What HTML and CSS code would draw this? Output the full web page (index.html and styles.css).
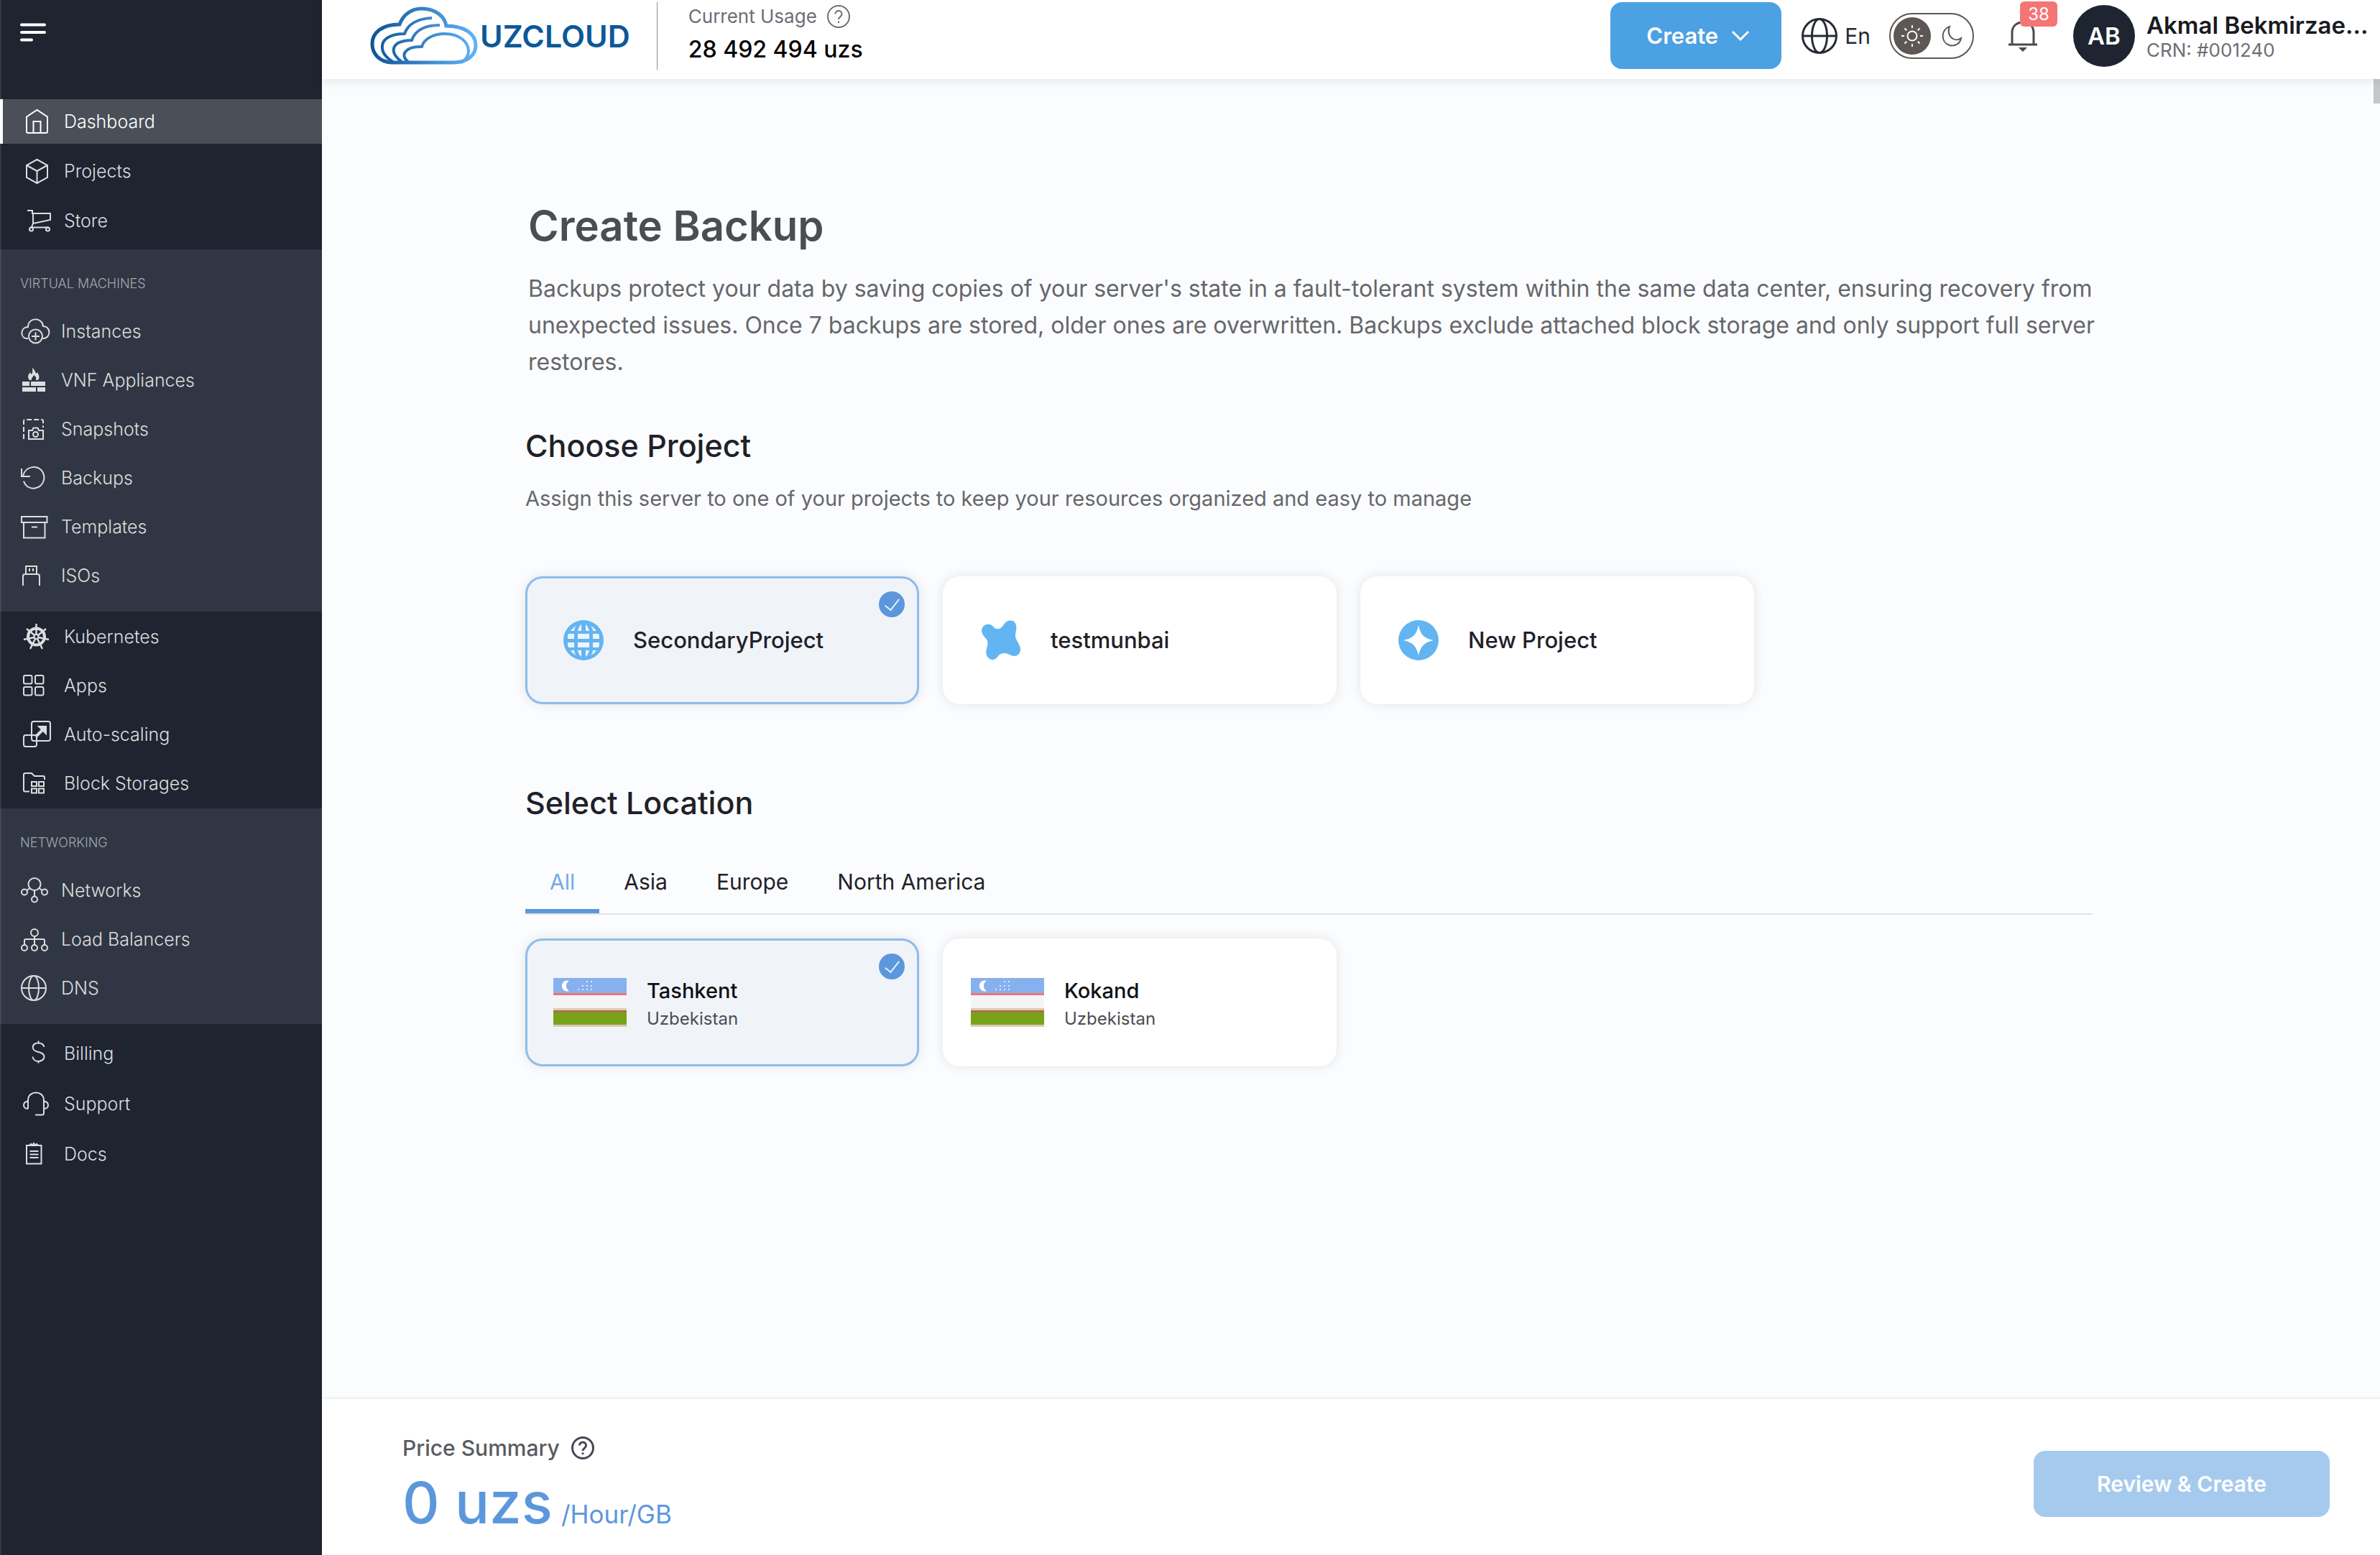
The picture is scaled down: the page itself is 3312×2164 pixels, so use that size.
FILE: index.html
```html
<!DOCTYPE html>
<html lang="en">
<head>
<meta charset="utf-8">
<title>Create Backup - UzCloud</title>
<meta name="viewport" content="width=device-width, initial-scale=1">
<link rel="stylesheet" href="styles.css">
</head>
<body>
<div class="app">
  <aside class="sidebar">
    <button class="menu-button" type="button" aria-label="Toggle menu">
      <svg class="menu-icon" viewBox="0 0 36 26"><path d="M2 2.500h32M2 13h32M2 23.500h14"/></svg>
    </button>
    <nav class="nav" aria-label="Main">
      <div class="nav-group nav-group-first">
        <a class="nav-item is-active" href="#dashboard">
          <svg class="icon" viewBox="0 0 40 40"><path d="M6 13.500 20.500 4 35 13.500V34a2 2 0 0 1-2 2H8a2 2 0 0 1-2-2zM15.500 36V20h10v16"/></svg>
          <span>Dashboard</span></a>
        <a class="nav-item" href="#projects">
          <svg class="icon" viewBox="0 0 40 40"><path d="M20.500 4 35 12v17l-14.500 8L6 29V12zM6 12l14.500 8L35 12M20.500 20v17"/></svg>
          <span>Projects</span></a>
        <a class="nav-item" href="#store">
          <svg class="icon" viewBox="0 0 40 40"><path d="M7 6h7v4h25v9l-24 5V10M15 24l-2 5M12 29.500h25"/><circle cx="12.500" cy="32" r="2.500"/><circle cx="35.500" cy="32" r="2.500"/></svg>
          <span>Store</span></a>
      </div>
      <div class="nav-group nav-group-shaded">
        <h2 class="nav-title">VIRTUAL MACHINES</h2>
        <a class="nav-item" href="#instances">
          <svg class="icon" viewBox="0 0 40 40"><path d="M12 30H9.500C0 28 2 14 12 14 12 0 32 0 33 13c11 0 11 16 1 17h-2"/><circle cx="22.500" cy="27" r="9.500"/><path d="M22.500 21.500v11M17 27h11"/></svg>
          <span>Instances</span></a>
        <a class="nav-item" href="#vnf">
          <svg class="icon icon-solid" viewBox="0 0 40 40"><path d="M4 22h10v6H4zM16 22h20v6H16zM4 30h19v6H4zM25 30h11v6H25zM14 20c-4-5-1-8 1-11 1 2 1 2 2 3 2-3 1-6 1-9 3 2 4 5 5 8l2-2c2 4 4 7 1 11h-3c1-3 0-5-3-7-1 3-4 4-3 7z"/></svg>
          <span>VNF Appliances</span></a>
        <a class="nav-item" href="#snapshots">
          <svg class="icon" viewBox="0 0 40 40"><path stroke-dasharray="7 3" d="M6 34V9a2 2 0 0 1 2-2h23a2 2 0 0 1 2 2v9"/><path d="M13 22h5l1.500-3.500h6L27 22h6v12H13z"/><circle cx="22.500" cy="27.500" r="3.500"/></svg>
          <span>Snapshots</span></a>
        <a class="nav-item" href="#backups">
          <svg class="icon" viewBox="0 0 40 40"><path d="M3 7v11h12M5 17C9 3 26 1 32.500 12 40 27 24 40 12 32.500c-3-2-5-4.500-6-8"/></svg>
          <span>Backups</span></a>
        <a class="nav-item" href="#templates">
          <svg class="icon" viewBox="0 0 40 40"><path d="M3 6h35.500v8H3zM6 14v21.500h29.500V14M17 20.500h8"/></svg>
          <span>Templates</span></a>
        <a class="nav-item" href="#isos">
          <svg class="icon" viewBox="0 0 40 40"><path d="M5 34V21a3 3 0 0 1 3-3h17a3 3 0 0 1 3 3v13M9 18V7h15v11M14 10v4M19 10v4"/></svg>
          <span>ISOs</span></a>
      </div>
      <div class="nav-group">
        <a class="nav-item" href="#kubernetes">
          <svg class="icon" viewBox="0 0 40 40"><circle cx="19.500" cy="20" r="11.500" stroke-width="4"/><circle cx="19.500" cy="20" r="3"/><path stroke-width="2.500" d="M19.500 17V2M22 18l11-9M22.500 21 37 24M21 23l7 14M18 23l-7 14M16.500 21 2 24M17 18 6 9"/></svg>
          <span>Kubernetes</span></a>
        <a class="nav-item" href="#apps">
          <svg class="icon" viewBox="0 0 40 40"><rect x="2" y="6" width="11.500" height="11.500" rx="2"/><rect x="18" y="6" width="11.500" height="11.500" rx="2"/><rect x="2" y="22" width="11.500" height="11.500" rx="2"/><rect x="18" y="22" width="11.500" height="11.500" rx="2"/></svg>
          <span>Apps</span></a>
        <a class="nav-item" href="#auto-scaling">
          <svg class="icon" viewBox="0 0 40 40"><rect x="13" y="2" width="26" height="27" rx="3"/><rect x="2" y="21" width="18" height="16" rx="3"/><path stroke-width="4" d="M19 23 31 11"/><path fill="currentColor" d="M23 9h10v10z"/></svg>
          <span>Auto-scaling</span></a>
        <a class="nav-item" href="#block-storages">
          <svg class="icon" viewBox="0 0 40 40"><path d="M10 31.500H4a2 2 0 0 1-2-2V8a2 2 0 0 1 2-2h9l4 4h12a2 2 0 0 1 2 2v3"/><rect x="13" y="18" width="7" height="6"/><rect x="23" y="18" width="7" height="6"/><rect x="13" y="27.500" width="7" height="6"/><rect x="23" y="27.500" width="7" height="6"/></svg>
          <span>Block Storages</span></a>
      </div>
      <div class="nav-group nav-group-shaded">
        <h2 class="nav-title">NETWORKING</h2>
        <a class="nav-item" href="#networks">
          <svg class="icon" viewBox="0 0 40 40"><circle cx="21" cy="11.500" r="8.500"/><circle cx="7" cy="22.500" r="4"/><circle cx="35" cy="22.500" r="4"/><circle cx="21" cy="32.500" r="4"/><path d="m14.500 17-4 3M27.500 17l4 3M21 20v8.500"/></svg>
          <span>Networks</span></a>
        <a class="nav-item" href="#load-balancers">
          <svg class="icon" viewBox="0 0 40 40"><circle cx="21" cy="11" r="5"/><circle cx="7" cy="32" r="4"/><circle cx="21" cy="32" r="4"/><circle cx="35" cy="32" r="4"/><path d="M21 16v12M7 28v-6a2 2 0 0 1 2-2h24a2 2 0 0 1 2 2v6"/></svg>
          <span>Load Balancers</span></a>
        <a class="nav-item" href="#dns">
          <svg class="icon" viewBox="0 0 40 40"><circle cx="20" cy="20" r="17"/><ellipse cx="20" cy="20" rx="7" ry="17"/><path d="M3 20h34"/></svg>
          <span>DNS</span></a>
      </div>
      <div class="nav-group nav-group-last">
        <a class="nav-item" href="#billing">
          <svg class="icon" viewBox="0 0 40 40"><path d="M30.500 11c-1-4-4-5.500-8-5.500-10 0-10 10.500-2 12 4 1 10 2 10 7 0 8-15 9-16 0M22.500 2.500v3.500M22.500 30v3.500"/></svg>
          <span>Billing</span></a>
        <a class="nav-item" href="#support">
          <svg class="icon" viewBox="0 0 40 40"><path d="M8 27V15C8 1 30 1 30 15v18a2.500 2.500 0 0 1-2.500 2.500H18M8 16.500c-8 1-8 10 0 10.500M30 16.500c8 1 8 10 0 10.500"/></svg>
          <span>Support</span></a>
        <a class="nav-item" href="#docs">
          <svg class="icon" viewBox="0 0 40 40"><path d="M6 8h20.500v25.500H6zM10 8l2-2 2 2 2-3 2 3 2-2 2 2M10.500 16h12M10.500 20.500h12M10.500 25h12"/></svg>
          <span>Docs</span></a>
      </div>
    </nav>
  </aside>

  <div class="page">
    <header class="topbar">
      <a class="logo" href="#home">
        <svg class="logo-mark" viewBox="0 0 150 81">
          <defs><linearGradient id="cloud" x1="0" y1="0" x2="150" y2="0" gradientUnits="userSpaceOnUse"><stop offset="0" stop-color="#0b5394"/><stop offset=".5" stop-color="#3a83c6"/><stop offset="1" stop-color="#62b5f8"/></linearGradient></defs>
          <g fill="none" stroke="url(#cloud)" stroke-width="5">
            <path d="M30 78C12 77 3 65 3 52c0-16 14-27 38-27C46 11 58 3 72 3c19 0 32 11 34 24 24 0 41 10 41 27 0 14-12 24-31 24z"/>
            <path stroke-width="4" d="M32 77C20 70 16 62 17 54c1-10 14-16 31-16 4-12 16-21 38-22"/>
            <path stroke-width="4" d="M44 77C28 66 26 48 58 47c4-12 16-21 39-21"/>
            <path stroke-width="4" d="M53 77c-12-9-4-22 19-21 3-11 16-18 32-18 21 0 33 12 33 24 0 7-4 12-10 16"/>
          </g>
        </svg>
        <span class="logo-text">UZCLOUD</span>
      </a>
      <div class="usage">
        <div class="usage-label">Current Usage
          <button class="help" type="button" aria-label="About current usage"><svg viewBox="0 0 32 32"><circle cx="16" cy="16" r="15"/><path d="M11.500 12.500c0-6 9-6 9 0 0 4-4.500 4-4.500 7.500M16 22.500V25"/></svg></button>
        </div>
        <div class="usage-value">28 492 494 uzs</div>
      </div>
      <div class="actions">
        <button class="create-button" type="button">Create
          <svg class="chevron" viewBox="0 0 26 16"><path d="m2 2 11 11L24 2"/></svg></button>
        <button class="language" type="button">
          <svg class="globe" viewBox="0 0 50 50"><circle cx="25" cy="25" r="23.500"/><ellipse cx="25" cy="25" rx="10.500" ry="23.500"/><path d="M2 25h46"/></svg>En</button>
        <button class="theme" type="button" aria-label="Switch theme">
          <span class="theme-knob"><svg class="sun" viewBox="0 0 34 34"><circle cx="17" cy="17" r="6.500"/><path d="M17 2v4M17 28v4M2 17h4M28 17h4M6.500 6.500l2.800 2.800M24.700 24.700l2.800 2.800M27.500 6.500l-2.800 2.800M9.300 24.700l-2.800 2.800"/></svg></span>
          <svg class="moon" viewBox="0 0 30 30"><path d="M12 2C0 6-1 24 12 28c8 2 15-3 16-10-9 7-21-3-16-16z"/></svg>
        </button>
        <button class="bell" type="button" aria-label="Notifications">
          <svg class="bell-icon" viewBox="0 0 44 44"><path d="M7 33V17C7 9 13 3 22 3s15 6 15 14v16M2 34h40M19.500 39.500h5L22 42z"/></svg>
          <span class="badge">38</span></button>
        <a class="profile" href="#profile">
          <span class="avatar">AB</span>
          <span class="profile-text"><span class="profile-name">Akmal Bekmirzae...</span><span class="profile-crn">CRN: #001240</span></span>
        </a>
      </div>
    </header>

    <main class="content">
      <div class="intro">
        <h1>Create Backup</h1>
        <p>Backups protect your data by saving copies of your server's state in a fault-tolerant system within the same data center, ensuring recovery from unexpected issues. Once 7 backups are stored, older ones are overwritten. Backups exclude attached block storage and only support full server restores.</p>
      </div>

      <section class="projects" aria-labelledby="projects-title">
        <h2 id="projects-title">Choose Project</h2>
        <p>Assign this server to one of your projects to keep your resources organized and easy to manage</p>
        <div class="cards">
          <label class="card">
            <input type="radio" name="project" checked>
            <svg class="project-icon" viewBox="0 0 56 56"><circle cx="28" cy="28" r="28" fill="#62b5f2"/><path fill="#f0f4f9" d="M25 6v9h-5c1-4 3-8 5-9zM31 6v9h5c-1-4-3-8-5-9zM18 8c-4 2-6 4-8 7h5c0-2 1-5 3-7zM38 8c4 2 6 4 8 7h-5c0-2-1-5-3-7zM7 19h8v7H6c0-3 0-5 1-7zM20 19h16v7H20zM41 19h8c1 2 1 4 1 7h-9zM6 31h9v7H7c-1-2-1-4-1-7zM20 31h16v7H20zM41 31h9c0 3 0 5-1 7h-8zM10 42h5c0 2 1 5 3 7-4-2-6-4-8-7zM20 42h5v9c-2-1-4-5-5-9zM31 42h5c-1 4-3 8-5 9zM41 42h5c-2 3-4 5-8 7 2-2 3-5 3-7z"/></svg>
            <span class="card-name">SecondaryProject</span>
          </label>
          <label class="card">
            <input type="radio" name="project">
            <svg class="project-icon" viewBox="0 0 56 56"><path fill="#62b5f2" d="M3 9c4-5 12-4 15 1 4 4 10 3 14-4C36 0 43-1 47 3c4 5 2 11 1 17-1 8 8 14 7 22-1 8-9 10-15 6-6-3-12-3-16 2-3 5-9 7-13 3-5-4-4-11-2-17 2-7-1-9-5-14C1 18 0 13 3 9z"/></svg>
            <span class="card-name">testmunbai</span>
          </label>
          <label class="card">
            <input type="radio" name="project">
            <svg class="project-icon" viewBox="0 0 56 56"><circle cx="28" cy="28" r="28" fill="#62b5f2"/><path fill="#fff" d="M28 7c3 14 8 18 21 21-13 3-18 8-21 21-3-13-8-18-21-21C20 25 25 21 28 7z"/></svg>
            <span class="card-name">New Project</span>
          </label>
        </div>
      </section>

      <section class="locations" aria-labelledby="locations-title">
        <h2 id="locations-title">Select Location</h2>
        <div class="tabs" role="tablist">
          <button class="tab is-selected" type="button" role="tab" aria-selected="true">All</button>
          <button class="tab" type="button" role="tab" aria-selected="false">Asia</button>
          <button class="tab" type="button" role="tab" aria-selected="false">Europe</button>
          <button class="tab" type="button" role="tab" aria-selected="false">North America</button>
        </div>
        <div class="cards">
          <label class="card card-location">
            <input type="radio" name="location" checked>
            <svg class="flag" viewBox="0 0 102 68"><path fill="#f4f4f4" d="M0 0h102v68H0z"/><path fill="#87b0ef" d="M0 0h102v21H0z"/><path fill="#f27474" d="M0 21h102v3H0z"/><path fill="#dccbb8" d="M0 42h102v3H0zM0 65h102v3H0z"/><path fill="#ad6f45" d="M0 45h102v3H0z"/><path fill="#78a318" d="M0 48h102v17H0z"/><path fill="#fff" d="M22 4a7.500 7.500 0 1 0 0 14 8 8 0 0 1 0-14z"/><path stroke="#dfeafb" stroke-width="2" stroke-dasharray="2 4" d="M46 5h9M40 11h15M34 16h21"/></svg>
            <span class="place"><span class="place-name">Tashkent</span><span class="place-country">Uzbekistan</span></span>
          </label>
          <label class="card card-location">
            <input type="radio" name="location">
            <svg class="flag" viewBox="0 0 102 68"><path fill="#f4f4f4" d="M0 0h102v68H0z"/><path fill="#87b0ef" d="M0 0h102v21H0z"/><path fill="#f27474" d="M0 21h102v3H0z"/><path fill="#dccbb8" d="M0 42h102v3H0zM0 65h102v3H0z"/><path fill="#ad6f45" d="M0 45h102v3H0z"/><path fill="#78a318" d="M0 48h102v17H0z"/><path fill="#fff" d="M22 4a7.500 7.500 0 1 0 0 14 8 8 0 0 1 0-14z"/><path stroke="#dfeafb" stroke-width="2" stroke-dasharray="2 4" d="M46 5h9M40 11h15M34 16h21"/></svg>
            <span class="place"><span class="place-name">Kokand</span><span class="place-country">Uzbekistan</span></span>
          </label>
        </div>
      </section>
      <div class="scroll-thumb"></div>
    </main>

    <footer class="summary">
      <div class="price">
        <div class="price-label">Price Summary
          <button class="help help-dark" type="button" aria-label="About the price"><svg viewBox="0 0 32 32"><circle cx="16" cy="16" r="14.500"/><path d="M11.500 12.500c0-6 9-6 9 0 0 4-4.500 4-4.500 7.500M16 22.500V25"/></svg></button>
        </div>
        <div class="price-value"><strong>0 uzs</strong><span>/Hour/GB</span></div>
      </div>
      <button class="review-button" type="button">Review &amp; Create</button>
    </footer>
  </div>
</div>
</body>
</html>
```

FILE: styles.css
```css
* { box-sizing: border-box; }

body {
  margin: 0;
  font-family: Inter, "Noto Sans", sans-serif;
  color: #1f2129;
  background: #fbfcfe;
}

h1, h2, p { margin: 0; }

button {
  margin: 0;
  padding: 0;
  border: 0;
  background: none;
  color: inherit;
  font: inherit;
  cursor: pointer;
}

a { color: inherit; text-decoration: none; }
svg { display: block; flex: none; overflow: visible; }

.app { display: flex; min-height: 100vh; }

/* Sidebar */
.sidebar {
  flex: none;
  width: 448px;
  background: #1e2430;
  box-shadow: inset 2px 0 #303643;
}

.menu-button { display: block; padding: 32px 28px 80px; }
.menu-icon { width: 36px; height: 26px; fill: none; stroke: #fff; stroke-width: 4; stroke-linecap: round; }

.nav-group { display: flex; flex-direction: column; gap: 6px; padding: 4px 0; }
.nav-group-first { gap: 7px; padding: 0 0 9px; }
.nav-group-last { padding: 10px 0; gap: 8px; }
.nav-group-shaded { padding: 33px 0 19px; background: #303643; box-shadow: inset 2px 0 #414754; }

.nav-title {
  padding: 0 28px;
  margin-bottom: 14px;
  color: #a4a7ae;
  font-size: 18px;
  font-weight: 300;
  line-height: 30px;
}

.nav-item {
  display: flex;
  align-items: center;
  gap: 18px;
  height: 62px;
  padding-left: 27px;
  border-left: 4px solid transparent;
  color: #dcdddf;
  font-size: 25px;
  font-weight: 300;
}
.nav-group-shaded .nav-item { padding-left: 23px; }
.nav-item.is-active { background: #4a4f58; border-color: #fff; color: #fff; }

.icon { width: 40px; height: 40px; fill: none; stroke: currentColor; stroke-width: 2; }
.icon-solid { fill: currentColor; stroke: none; }

/* Top bar */
.page { flex: 1; min-width: 0; display: flex; flex-direction: column; }

.topbar {
  display: flex;
  align-items: center;
  height: 110px;
  padding: 0 18px 11px 67px;
  background: #fff;
  box-shadow: 0 2px 14px rgba(0, 0, 0, .1);
  position: relative;
  z-index: 1;
}

.logo { display: flex; align-items: center; gap: 3px; }
.logo-mark { width: 150px; height: 81px; }
.logo-text { color: #0b5899; font-size: 43px; font-weight: 600; line-height: 48px; }

.usage {
  height: 94px;
  margin-left: 37px;
  padding-left: 43px;
  border-left: 1px solid #8d8d8d;
}
.usage-label { display: flex; align-items: center; gap: 14px; color: #6c6e76; font-size: 26px; line-height: 40px; }
.usage-value { color: #000; font-size: 32px; font-weight: 500; line-height: 52px; }

.help { width: 32px; height: 32px; color: #6c6e76; }
.help svg { width: 32px; height: 32px; fill: none; stroke: currentColor; stroke-width: 2; }
.help-dark { color: #444954; }
.help-dark svg { stroke-width: 3; }

.actions { display: flex; align-items: center; margin-left: auto; }

.create-button {
  display: flex;
  align-items: center;
  justify-content: center;
  gap: 18px;
  width: 238px;
  height: 93px;
  padding-left: 6px;
  border-radius: 16px;
  background: #4ba1e2;
  color: #fff;
  font-size: 31px;
  font-weight: 600;
}
.chevron { width: 26px; height: 16px; fill: none; stroke: #fff; stroke-width: 3; }

.language { display: flex; align-items: center; gap: 10px; margin-left: 28px; font-size: 30px; color: #262b36; }
.globe { width: 50px; height: 50px; fill: none; stroke: #262b36; stroke-width: 3; }

.theme {
  display: flex;
  align-items: center;
  gap: 14px;
  width: 118px;
  height: 64px;
  margin-left: 26px;
  padding: 0 4px;
  border: 2px solid #5d5756;
  border-radius: 32px;
}
.theme-knob { display: grid; place-items: center; width: 52px; height: 52px; border-radius: 50%; background: #5d5756; }
.sun { width: 34px; height: 34px; fill: none; stroke: #fff; stroke-width: 2; }
.moon { width: 30px; height: 30px; fill: none; stroke: #5d5756; stroke-width: 2; }

.bell { position: relative; margin-left: 46px; }
.bell-icon { width: 44px; height: 44px; fill: none; stroke: #4a4a4a; stroke-width: 3; }
.badge {
  position: absolute;
  left: 18px;
  top: -26px;
  width: 52px;
  height: 35px;
  border-radius: 6px;
  background: #f57575;
  color: #fff;
  font-size: 24px;
  line-height: 35px;
}

.profile { display: flex; align-items: center; gap: 16px; margin-left: 48px; }
.avatar {
  display: grid;
  place-items: center;
  width: 86px;
  height: 86px;
  border-radius: 50%;
  background: #1e2430;
  color: #fff;
  font-size: 33px;
  font-weight: 600;
}
.profile-text { display: flex; flex-direction: column; width: 307px; padding-top: 2px; white-space: nowrap; }
.profile-name { color: #1a1a1f; font-size: 33px; font-weight: 600; line-height: 38px; }
.profile-crn { color: #6c6e76; font-size: 26px; line-height: 32px; }

/* Content */
.content { flex: 1; position: relative; padding: 168px 400px 60px 283px; }

.intro { margin-right: -24px; padding-left: 4px; }
h1 { color: #4c4d50; font-size: 58px; font-weight: 600; line-height: 72px; }
.intro p { margin-top: 26px; color: #66676b; font-size: 32px; line-height: 51px; }

.content h2 { font-size: 43px; font-weight: 500; line-height: 56px; }
.projects { margin-top: 63px; }
.projects p { margin-top: 22px; color: #66676b; font-size: 29px; line-height: 48px; }
.projects .cards { margin-top: 84px; }
.locations { margin-top: 109px; }
.locations .cards { margin-top: 33px; }

.cards { display: flex; gap: 33px; }
.card {
  position: relative;
  display: flex;
  align-items: center;
  gap: 41px;
  width: 548px;
  height: 178px;
  padding: 0 50px;
  border: 3px solid #fff;
  border-radius: 24px;
  background: #fff;
  box-shadow: 0 0 16px rgba(0, 0, 0, .1);
  cursor: pointer;
}
.card:has(input:checked) { background: #f0f4f9; border-color: #8fbcec; }
.card-location { gap: 28px; padding: 0 36px; }

.card input {
  appearance: none;
  position: absolute;
  top: 18px;
  right: 17px;
  width: 36px;
  height: 36px;
  margin: 0;
  border-radius: 50%;
}
.card input:checked { display: grid; place-items: center; background: #5c97dc; }
.card input:checked::after {
  content: "";
  width: 9px;
  height: 18px;
  margin-bottom: 5px;
  border: solid #e6f0fb;
  border-width: 0 2px 2px 0;
  rotate: 38deg;
}

.project-icon { width: 56px; height: 56px; }
.card-name { font-size: 31px; font-weight: 500; line-height: 40px; }

.tabs { display: flex; margin-top: 38px; border-bottom: 2px solid #e1e3e6; }
.tab { padding: 24px 34px 18px; border-bottom: 6px solid transparent; font-size: 30px; line-height: 40px; }
.tab.is-selected { color: #76a8e8; border-color: #5c97dc; }

.flag { width: 102px; height: 68px; }
.place { display: flex; flex-direction: column; padding-top: 4px; }
.place-name { color: #0f1014; font-size: 29px; font-weight: 500; line-height: 42px; }
.place-country { color: #4c4d52; font-size: 24px; line-height: 36px; }

.scroll-thumb { position: absolute; right: 0; top: 0; width: 9px; height: 34px; background: #c4c6ca; }

/* Price summary */
.summary {
  display: flex;
  align-items: center;
  justify-content: space-between;
  padding: 48px 70px 29px 112px;
  border-top: 3px solid #f1f3f5;
  background: #fff;
}
.price-label { display: flex; align-items: center; gap: 16px; color: #5a5b60; font-size: 30px; font-weight: 500; line-height: 40px; }
.price-value { display: flex; align-items: baseline; gap: 12px; margin-top: 12px; color: #5c97dc; }
.price-value strong { font-size: 80px; font-weight: 500; line-height: 88px; }
.price-value span { font-size: 35px; line-height: 40px; }

.review-button {
  width: 412px;
  height: 92px;
  border-radius: 16px;
  background: #a6caee;
  color: #fff;
  font-size: 30px;
  font-weight: 600;
}
```
